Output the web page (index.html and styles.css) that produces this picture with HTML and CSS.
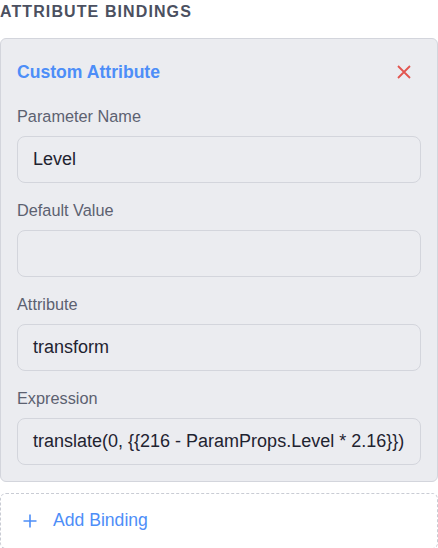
FILE: index.html
```html
<!DOCTYPE html>
<html>
<head>
<meta charset="utf-8">
<link rel="stylesheet" href="styles.css">
</head>
<body>
<div class="panel">
  <h2 class="heading">ATTRIBUTE BINDINGS</h2>
  <div class="card">
    <div class="card-head">
      <span class="card-title">Custom Attribute</span>
      <button class="close" aria-label="Remove">
        <svg width="14" height="14" viewBox="0 0 14 14"><path d="M1 1L13 13M13 1L1 13" stroke="#e2554f" stroke-width="1.8" fill="none" stroke-linecap="butt"/></svg>
      </button>
    </div>
    <div class="field">
      <label class="label">Parameter Name</label>
      <div class="input">Level</div>
    </div>
    <div class="field">
      <label class="label">Default Value</label>
      <div class="input"></div>
    </div>
    <div class="field">
      <label class="label">Attribute</label>
      <div class="input">transform</div>
    </div>
    <div class="field">
      <label class="label">Expression</label>
      <div class="input">translate(0, {{216 - ParamProps.Level * 2.16}})</div>
    </div>
  </div>
  <div class="add">
    <svg width="14" height="14" viewBox="0 0 14 14"><path d="M7 0.5V13.5M0.5 7H13.5" stroke="#4d8ef8" stroke-width="1.6" fill="none"/></svg>
    <span>Add Binding</span>
  </div>
</div>
</body>
</html>
```

FILE: styles.css
```css
* { box-sizing: border-box; }
html, body { margin: 0; padding: 0; background: #ffffff; }
body { font-family: "Liberation Sans", Arial, sans-serif; }
.panel { display: flex; flex-direction: column; width: 438px; }
.heading {
  margin: 0;
  font-size: 16px;
  font-weight: bold;
  letter-spacing: 1.1px;
  color: #4b5060;
  line-height: 24px;
  height: 38px;
  padding-top: 0;
}
.card {
  background: #ebecf0;
  border: 1px solid #d3d5dc;
  border-radius: 6px;
  padding: 16px;
  display: flex;
  flex-direction: column;
  gap: 16.9px;
}
.card-head {
  display: flex;
  align-items: center;
  justify-content: space-between;
  height: 34px;
}
.card-title {
  color: #4d8ef8;
  font-size: 17.6px;
  font-weight: bold;
}
.close {
  width: 24px;
  height: 24px;
  border: 0;
  background: transparent;
  padding: 0;
  margin-right: 5px;
  display: flex;
  align-items: center;
  justify-content: center;
}
.field { display: flex; flex-direction: column; }
.label {
  font-size: 16.3px;
  line-height: 20px;
  color: #5c6170;
  margin-bottom: 10px;
}
.input {
  height: 47px;
  border: 1px solid #d3d5dc;
  border-radius: 8px;
  background: #ebecf0;
  padding: 0 15px;
  display: flex;
  align-items: center;
  font-size: 18px;
  color: #1f2330;
  white-space: nowrap;
}
.add {
  margin-top: 11px;
  height: 56px;
  border: 1px dashed #c9ccd4;
  border-radius: 6px;
  display: flex;
  align-items: center;
  gap: 16px;
  padding-left: 22px;
  color: #4d8ef8;
  font-size: 17.6px;
}
```
